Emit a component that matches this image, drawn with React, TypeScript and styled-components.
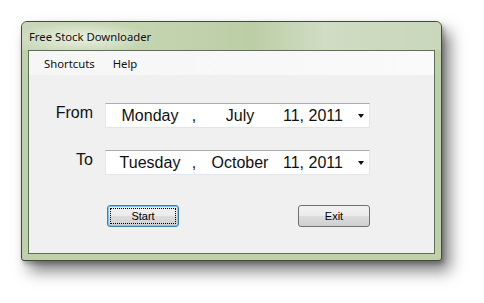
import React from 'react'
import styled, { createGlobalStyle } from 'styled-components'

const GlobalStyle = createGlobalStyle`
  html, body {
    margin: 0;
    padding: 0;
    background: #ffffff;
  }
  body {
    width: 484px;
    height: 303px;
    overflow: hidden;
  }
`

const Page = styled.div`
  padding: 21px 0 0 21px;
`

const Window = styled.div`
  width: 421px;
  height: 240px;
  box-sizing: border-box;
  border: 1px solid #3f4a3a;
  border-radius: 6px 6px 3px 3px;
  background: #bfd1aa;
  box-shadow: 8px 10px 16px rgba(0, 0, 0, 0.5), 2px 3px 4px rgba(0, 0, 0, 0.25);
  display: flex;
  flex-direction: column;
  padding: 0 6px 6px 6px;
`

const TitleBar = styled.div`
  height: 28px;
  display: flex;
  align-items: center;
  margin: 0 -6px;
  padding: 0 0 0 7px;
  border-radius: 5px 5px 0 0;
  background:
    radial-gradient(ellipse 70px 16px at 60px 16px, rgba(240, 245, 232, 0.85), rgba(240, 245, 232, 0)),
    linear-gradient(90deg, #c9d8b8 0%, #c2d3ae 35%, #bccea6 55%, #d0dcc3 72%, #c9d7bb 100%);
  font-family: 'Noto Sans', sans-serif;
  font-size: 11.3px;
  color: #111;
`

const Client = styled.div`
  flex: 1;
  display: flex;
  flex-direction: column;
  border: 1px solid #5f6e58;
  background: #f0f0f0;
`

const MenuBar = styled.div`
  height: 24px;
  display: flex;
  align-items: center;
  gap: 18px;
  padding-left: 15px;
  background: linear-gradient(90deg, #f6f6f6 0%, #f8f8f8 60%, #fafafa 100%);
  font-family: 'Noto Sans', sans-serif;
  font-size: 11.3px;
  color: #111;
`

const Form = styled.div`
  display: grid;
  grid-template-columns: 64px 265px;
  column-gap: 12px;
  row-gap: 22px;
  padding: 28px 0 0 0;
  align-items: center;
`

const Label = styled.div`
  text-align: right;
  font-family: 'Liberation Sans', Arial, sans-serif;
  font-size: 16px;
  color: #111;
  margin-top: -5px;
`

const Picker = styled.div`
  height: 25px;
  box-sizing: border-box;
  background: #ffffff;
  border: 1px solid #e2e6ea;
  border-top-color: #abadb3;
  display: grid;
  grid-template-columns: 82px 6px 86px 1fr 14px;
  align-items: center;
  padding: 0 5px 0 3px;
  font-family: 'Liberation Sans', Arial, sans-serif;
  font-size: 16px;
  color: #111;
  white-space: nowrap;
`

const Field = styled.span<{ $align?: 'center' | 'left' }>`
  text-align: ${p => p.$align || 'center'};
`

const Arrow = styled.span`
  justify-self: end;
  width: 0;
  height: 0;
  border-left: 3.5px solid transparent;
  border-right: 3.5px solid transparent;
  border-top: 4px solid #111;
  margin-top: 1px;
`

const ButtonRow = styled.div`
  display: flex;
  gap: 119px;
  padding: 30px 0 0 78px;
`

const Button = styled.button<{ $focused?: boolean }>`
  width: 72px;
  height: 22px;
  box-sizing: border-box;
  padding: 0;
  border-radius: 3px;
  border: 1px solid ${p => (p.$focused ? '#3c7fb1' : '#707070')};
  box-shadow: ${p => (p.$focused ? '0 0 0 1px #7ec4ee inset' : 'none')};
  background: linear-gradient(180deg, #f2f2f2 0%, #ebebeb 48%, #dddddd 52%, #cfcfcf 100%);
  font-family: 'Liberation Sans', Arial, sans-serif;
  font-size: 11px;
  color: #000;
  position: relative;

  &::after {
    content: '';
    display: ${p => (p.$focused ? 'block' : 'none')};
    position: absolute;
    inset: 2px;
    border: 1px dotted #000;
  }
`

const DatePicker: React.FC<{ day: string; month: string; date: string }> = ({ day, month, date }) => (
  <Picker>
    <Field>{day}</Field>
    <Field>,</Field>
    <Field>{month}</Field>
    <Field $align="left">{date}</Field>
    <Arrow />
  </Picker>
)

const App: React.FC = () => (
  <>
    <GlobalStyle />
    <Page>
      <Window>
        <TitleBar>Free Stock Downloader</TitleBar>
        <Client>
          <MenuBar>
            <span>Shortcuts</span>
            <span>Help</span>
          </MenuBar>
          <Form>
            <Label>From</Label>
            <DatePicker day="Monday" month="July" date="11, 2011" />
            <Label>To</Label>
            <DatePicker day="Tuesday" month="October" date="11, 2011" />
          </Form>
          <ButtonRow>
            <Button $focused>Start</Button>
            <Button>Exit</Button>
          </ButtonRow>
        </Client>
      </Window>
    </Page>
  </>
)

export default App
